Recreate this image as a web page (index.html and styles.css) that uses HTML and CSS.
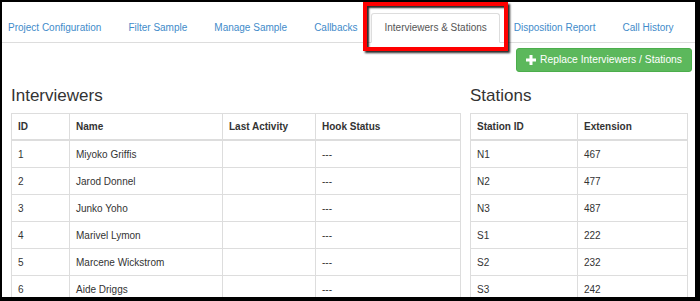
FILE: index.html
```html
<!DOCTYPE html>
<html lang="en">
<head>
    <meta charset="UTF-8">
    <meta name="viewport" content="width=device-width, initial-scale=1.0">
    <title>Interviewers &amp; Stations</title>
    <link rel="stylesheet" href="styles.css">
</head>
<body>

<div class="frame">
    <ul class="nav-tabs">
        <li><a href="#">Project Configuration</a></li>
        <li><a href="#">Filter Sample</a></li>
        <li><a href="#">Manage Sample</a></li>
        <li><a href="#">Callbacks</a></li>
        <li class="active"><a href="#">Interviewers &amp; Stations</a></li>
        <li><a href="#">Disposition Report</a></li>
        <li><a href="#">Call History</a></li>
    </ul>

    <div class="toolbar">
        <button type="button" class="btn btn-success">
            <svg class="icon-plus" width="10" height="10" viewBox="0 0 10 10" aria-hidden="true">
                <rect x="3.5" y="0" width="3" height="10" fill="#fff"/>
                <rect x="0" y="3.5" width="10" height="3" fill="#fff"/>
            </svg>
            Replace Interviewers / Stations
        </button>
    </div>

    <div class="panels">
        <section class="panel">
            <h3>Interviewers</h3>
            <table class="table table-interviewers">
                <colgroup>
                    <col class="col-id">
                    <col class="col-name">
                    <col class="col-activity">
                    <col class="col-hook">
                </colgroup>
                <thead>
                    <tr><th>ID</th><th>Name</th><th>Last Activity</th><th>Hook Status</th></tr>
                </thead>
                <tbody>
                    <tr><td>1</td><td>Miyoko Griffis</td><td></td><td>---</td></tr>
                    <tr><td>2</td><td>Jarod Donnel</td><td></td><td>---</td></tr>
                    <tr><td>3</td><td>Junko Yoho</td><td></td><td>---</td></tr>
                    <tr><td>4</td><td>Marivel Lymon</td><td></td><td>---</td></tr>
                    <tr><td>5</td><td>Marcene Wickstrom</td><td></td><td>---</td></tr>
                    <tr><td>6</td><td>Aide Driggs</td><td></td><td>---</td></tr>
                </tbody>
            </table>
        </section>

        <section class="panel">
            <h3>Stations</h3>
            <table class="table table-stations">
                <colgroup>
                    <col class="col-station">
                    <col class="col-ext">
                </colgroup>
                <thead>
                    <tr><th>Station ID</th><th>Extension</th></tr>
                </thead>
                <tbody>
                    <tr><td>N1</td><td>467</td></tr>
                    <tr><td>N2</td><td>477</td></tr>
                    <tr><td>N3</td><td>487</td></tr>
                    <tr><td>S1</td><td>222</td></tr>
                    <tr><td>S2</td><td>232</td></tr>
                    <tr><td>S3</td><td>242</td></tr>
                </tbody>
            </table>
        </section>
    </div>
</div>

</body>
</html>
```

FILE: styles.css
```css
html, body {
    margin: 0;
    padding: 0;
    height: 301px;
    overflow: hidden;
    background: #000; /* screenshot frame */
}
body {
    font-family: "Liberation Sans", Arial, sans-serif;
    font-size: 10px;
    color: #333;
}
.frame {
    margin: 2px 5px 0 2px;
    height: 295px;
    background: #fff;
    overflow: hidden;
}

/* tabs */
.nav-tabs {
    list-style: none;
    display: flex;
    margin: 11px 0 0 -7px;
    padding: 0;
    border-bottom: 1px solid #ddd;
}
.nav-tabs li {
    margin-right: 1px;
    margin-bottom: -1px;
    position: relative;
}
.nav-tabs a {
    display: block;
    padding: 7px 12px;
    line-height: 14px;
    border: 1px solid transparent;
    border-radius: 3px 3px 0 0;
    color: #428bca;
    text-decoration: none;
    white-space: nowrap;
}
.nav-tabs .active a {
    color: #555;
    background: #fff;
    border-color: #ddd #ddd transparent;
}
/* red annotation round the active tab */
.nav-tabs .active::after {
    content: "";
    position: absolute;
    left: -8px;
    right: -8px;
    top: -11px;
    bottom: -8px;
    border: 4px solid #f00;
    box-shadow: 2px 2px 2px rgba(0, 0, 0, 0.85), inset 2px 2px 2px rgba(0, 0, 0, 0.85);
}

/* toolbar */
.toolbar {
    display: flex;
    justify-content: flex-end;
    padding: 5px 3px 0 0;
}
.btn {
    font-family: inherit;
    font-size: 10.3px;
    line-height: 14px;
    padding: 4px 9px;
    border: 1px solid transparent;
    border-radius: 3px;
    cursor: pointer;
    display: flex;
    align-items: center;
    gap: 4px;
}
.btn-success {
    background-color: #5cb85c;
    border-color: #4cae4c;
    color: #fff;
}

/* panels */
.panels {
    display: grid;
    grid-template-columns: 450px 218px;
    gap: 9px;
    padding-left: 9px;
    margin-top: 14px;
}
.panel h3 {
    font-size: 17px;
    font-weight: normal;
    line-height: 20px;
    margin: 0 0 7px 0;
}
.table {
    width: 100%;
    table-layout: fixed;
    border-collapse: collapse;
    border: 1px solid #ddd;
}
.table th, .table td {
    border: 1px solid #ddd;
    padding: 0 6px;
    text-align: left;
    white-space: nowrap;
}
.table th {
    height: 25px;
    border-bottom-width: 2px;
    font-weight: bold;
}
.table td {
    height: 26px;
}
.table-interviewers .col-id { width: 58px; }
.table-interviewers .col-name { width: 153px; }
.table-interviewers .col-activity { width: 93px; }
.table-stations .col-station { width: 107px; }
```
